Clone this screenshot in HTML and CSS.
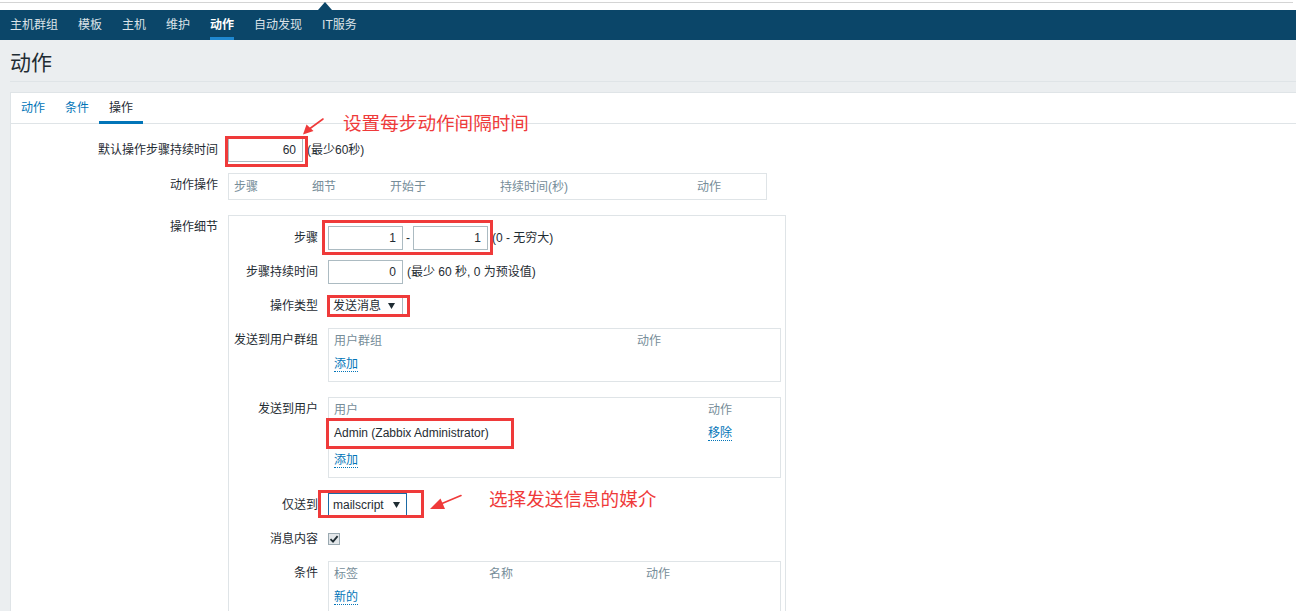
FILE: index.html
```html
<!DOCTYPE html>
<html lang="zh-CN">
<head>
<meta charset="utf-8">
<title>动作</title>
<link rel="stylesheet" href="styles.css">
</head>
<body>
<div class="topstrip"><div class="topline"></div><span class="notch"></span></div>
<nav class="subnav">
  <a>主机群组</a><a>模板</a><a>主机</a><a>维护</a><a class="active">动作</a><a>自动发现</a><a>IT服务</a>
</nav>
<main class="wrapper">
  <header class="page-title"><h1>动作</h1></header>
  <section class="panel">
    <div class="tabs"><a>动作</a><a>条件</a><a class="active">操作</a></div>
    <div class="form">
      <div class="row r1">
        <div class="lbl">默认操作步骤持续时间</div>
        <div class="ctl">
          <span class="hl hl-1"><span class="inp">60</span></span>
          <span class="hint">(最少60秒)</span>
        </div>
      </div>
      <div class="row r2">
        <div class="lbl">动作操作</div>
        <div class="optable">
          <span>步骤</span><span>细节</span><span>开始于</span><span>持续时间(秒)</span><span>动作</span>
        </div>
      </div>
      <div class="row r3">
        <div class="lbl">操作细节</div>
        <div class="details">
          <div class="irow">
            <div class="ilbl">步骤</div>
            <div class="ctl">
              <span class="hl hl-step"><span class="inp">1</span><span class="dash">-</span><span class="inp">1</span></span>
              <span class="hint">(0 - 无穷大)</span>
            </div>
          </div>
          <div class="irow">
            <div class="ilbl">步骤持续时间</div>
            <div class="ctl">
              <span class="inp">0</span>
              <span class="hint">(最少 60 秒, 0 为预设值)</span>
            </div>
          </div>
          <div class="irow">
            <div class="ilbl">操作类型</div>
            <div class="ctl">
              <span class="hl hl-type"><span class="sel sel-type">发送消息<svg class="caret" width="7" height="6" viewBox="0 0 7 6"><polygon points="0,0 7,0 3.5,6" fill="#1f2c33"/></svg></span></span>
            </div>
          </div>
          <div class="irow irow-tbl">
            <div class="ilbl">发送到用户群组</div>
            <div class="tbl">
              <div class="trow head cols-group"><span>用户群组</span><span>动作</span></div>
              <div class="trow"><span class="lnk">添加</span></div>
            </div>
          </div>
          <div class="irow irow-tbl">
            <div class="ilbl">发送到用户</div>
            <div class="tbl">
              <div class="trow head cols-user"><span>用户</span><span>动作</span></div>
              <div class="trow cols-user admin-row"><span class="admin">Admin (Zabbix Administrator)</span><span><span class="lnk">移除</span></span></div>
              <div class="trow"><span class="lnk">添加</span></div>
            </div>
          </div>
          <div class="irow">
            <div class="ilbl">仅送到</div>
            <div class="ctl">
              <span class="hl hl-media"><span class="sel sel-media">mailscript<svg class="caret" width="7" height="6" viewBox="0 0 7 6"><polygon points="0,0 7,0 3.5,6" fill="#1f2c33"/></svg></span></span>
            </div>
          </div>
          <div class="irow">
            <div class="ilbl">消息内容</div>
            <div class="ctl">
              <span class="chk"><svg width="10" height="10" viewBox="0 0 10 10"><path d="M1.5 5.2 L4 7.6 L8.6 2.2" fill="none" stroke="#1f2c33" stroke-width="1.8"/></svg></span>
            </div>
          </div>
          <div class="irow irow-tbl">
            <div class="ilbl">条件</div>
            <div class="tbl">
              <div class="trow head cols-cond"><span>标签</span><span>名称</span><span>动作</span></div>
              <div class="trow"><span class="lnk">新的</span></div>
            </div>
          </div>
        </div>
      </div>
    </div>
  </section>
</main>

<div class="note note-1">设置每步动作间隔时间</div>
<div class="note note-2">选择发送信息的媒介</div>
<svg class="arrows" width="1296" height="611" viewBox="0 0 1296 611">
  <line x1="323" y1="119" x2="310" y2="128.5" stroke="#ef3a3a" stroke-width="1.6" stroke-linecap="round"/>
  <polygon points="303,134.5 306.5,124.5 313.5,131" fill="#ef3a3a"/>
  <line x1="461" y1="495.5" x2="442" y2="503.6" stroke="#ef3a3a" stroke-width="1.6" stroke-linecap="round"/>
  <polygon points="430,509 440.5,498.5 445,509" fill="#ef3a3a"/>
</svg>
</body>
</html>
```
FILE: styles.css
```css
html, body {
  margin: 0;
  overflow: hidden;
}
body {
  font-family: "Liberation Sans", "Noto Sans CJK SC", sans-serif;
  font-size: 12px;
  line-height: 1.2;
  color: #1f2c33;
  background: #ebeef0;
  position: relative;
}

/* top strip */
.topstrip {
  height: 10px;
  box-sizing: border-box;
  padding-top: 2px;
  background: #fff;
  position: relative;
}
.topline {
  height: 1px;
  margin-right: 3px;
  background: #d4d4d4;
}
.notch {
  position: absolute;
  left: 318px;
  top: 2px;
  width: 0;
  height: 0;
  border-left: 7.5px solid transparent;
  border-right: 7.5px solid transparent;
  border-bottom: 8px solid #0b4669;
}

/* sub navigation */
.subnav {
  display: flex;
  gap: 20px;
  height: 30px;
  padding-left: 10px;
  background: #0b4669;
}
.subnav a {
  box-sizing: border-box;
  height: 30px;
  padding-top: 3px;
  line-height: 24px;
  border-bottom: 3px solid transparent;
  color: #dce3e8;
}
.subnav a.active {
  color: #fff;
  font-weight: bold;
  border-bottom-color: #1f88d0;
}

/* page */
.wrapper {
  padding-left: 10px;
}
.page-title {
  box-sizing: border-box;
  height: 42px;
  padding-top: 4px;
  display: flex;
  align-items: center;
  border-bottom: 1px solid #dfe4e7;
  margin-bottom: 10px;
}
.page-title h1 {
  margin: 0;
  font-size: 21px;
  font-weight: normal;
  line-height: 26px;
  color: #1f2c33;
}
.panel {
  background: #fff;
  border: 1px solid #dfe4e7;
  border-right: none;
  min-height: 600px;
}

/* tabs */
.tabs {
  display: flex;
  box-sizing: border-box;
  height: 31px;
  border-bottom: 1px solid #dfe4e7;
}
.tabs a {
  box-sizing: border-box;
  height: 31px;
  padding: 3px 10px 0;
  line-height: 24px;
  border-bottom: 3px solid transparent;
  color: #0275b8;
}
.tabs a.active {
  color: #1f2c33;
  border-bottom-color: #0275b8;
}

/* form */
.form {
  padding-top: 14px;
}
.row {
  display: flex;
  align-items: flex-start;
}
.r1 { margin-bottom: 11px; }
.r2 { margin-bottom: 15px; }
.lbl {
  flex: none;
  width: 207px;
  margin-right: 10px;
  text-align: right;
  line-height: 24px;
}
.ctl {
  display: flex;
  align-items: center;
  height: 24px;
}
.inp {
  box-sizing: border-box;
  width: 75px;
  height: 24px;
  border: 1px solid #acbbc2;
  background: #fff;
  text-align: right;
  padding-right: 6px;
  line-height: 22px;
}
.hint {
  margin-left: 4px;
}
.dash {
  width: 4px;
  margin: 0 3px;
  text-align: center;
}

.optable {
  box-sizing: border-box;
  width: 539px;
  height: 27px;
  border: 1px solid #dfe4e7;
  padding: 0 5px;
  display: grid;
  grid-template-columns: 78px 78px 110px 197px auto;
  line-height: 26px;
  color: #768d99;
}

.details {
  box-sizing: border-box;
  width: 558px;
  border: 1px solid #dfe4e7;
  padding: 10px 4px 30px 0;
}
.irow {
  display: flex;
  align-items: flex-start;
  margin-bottom: 10px;
}
.irow-tbl {
  margin-bottom: 15px;
}
.ilbl {
  flex: none;
  width: 89px;
  margin-right: 10px;
  text-align: right;
  line-height: 24px;
}

.sel {
  box-sizing: border-box;
  height: 22px;
  border: 1px solid #acbbc2;
  background: #fff;
  padding-left: 4px;
  padding-right: 7px;
  display: flex;
  align-items: center;
  justify-content: space-between;
  line-height: 20px;
}
.sel-type {
  width: 75px;
}
.sel-media {
  width: 79px;
  height: 24px;
  border-color: #1b6aa5;
  padding-right: 6px;
}
.caret {
  flex: none;
}

.tbl {
  box-sizing: border-box;
  width: 453px;
  border: 1px solid #dfe4e7;
  padding: 0 5px 5px;
}
.trow {
  line-height: 23px;
  height: 23px;
}
.trow.head {
  color: #768d99;
  line-height: 24px;
  height: 24px;
}
.cols-group {
  display: grid;
  grid-template-columns: 303px auto;
}
.cols-user {
  display: grid;
  grid-template-columns: 374px auto;
}
.cols-cond {
  display: grid;
  grid-template-columns: 155px 157px auto;
}
.lnk {
  color: #0275b8;
  border-bottom: 1px dotted #0275b8;
}

.chk {
  box-sizing: border-box;
  width: 12px;
  height: 12px;
  border: 1px solid #9aa9b1;
  background: #e3e7ea;
  display: flex;
  align-items: center;
  justify-content: center;
}

/* annotations */
.hl {
  position: relative;
  display: inline-flex;
  align-items: center;
}
.hl::after {
  content: "";
  position: absolute;
  border: 3px solid #ef3a3a;
  pointer-events: none;
}
.hl-1::after { left: -3px; right: -5px; top: -2px; bottom: -5px; }
.hl-step::after { left: -6px; right: -5px; top: -6px; bottom: -5px; }
.hl-type::after { left: -1px; right: -7px; top: 0; bottom: 0; }
.hl-media::after { left: -10px; right: -17px; top: -3px; bottom: -1px; }
.admin-row {
  position: relative;
  height: 27px;
  padding-bottom: 4px;
  box-sizing: border-box;
}
.admin-row::after {
  content: "";
  position: absolute;
  left: -8px;
  top: -4px;
  width: 188px;
  height: 31px;
  box-sizing: border-box;
  border: 3px solid #ef3a3a;
}

.note {
  position: absolute;
  font-family: "Noto Sans CJK SC", sans-serif;
  font-size: 18.6px;
  line-height: 20px;
  color: #ef3a3a;
  white-space: nowrap;
}
.note-1 { left: 343px; top: 112px; }
.note-2 { left: 489px; top: 488px; }
.arrows {
  position: absolute;
  left: 0;
  top: 0;
  pointer-events: none;
}
```
